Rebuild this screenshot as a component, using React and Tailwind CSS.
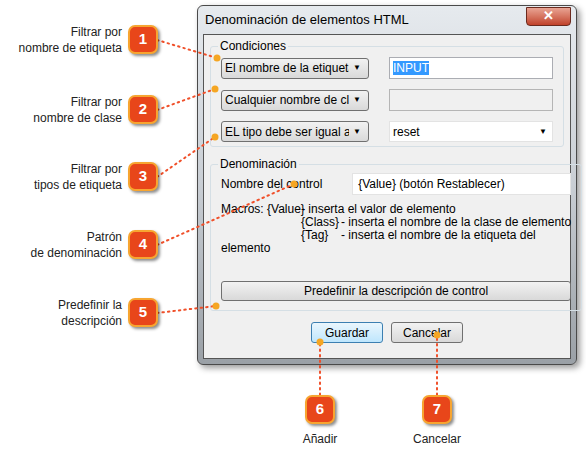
import React from "react";

const font = { fontFamily: '"Liberation Sans", Arial, sans-serif' };

function Badge({ n, className }) {
  return (
    <div
      className={`absolute w-[30px] h-[29px] rounded-[7px] bg-[#e8461a] border-2 border-[#f7a531] text-white text-[15px] font-bold flex items-center justify-center shadow-[2px_2px_3px_rgba(0,0,0,0.45)] ${className}`}
    >
      {n}
    </div>
  );
}

function Select({ label }) {
  return (
    <div className="w-[148px] h-[21px] border border-[#707070] rounded-[3px] bg-gradient-to-b from-[#f2f2f2] to-[#d9d9d9] flex items-center justify-between px-[3px] text-[12px] text-black">
      <span className="whitespace-nowrap overflow-hidden">{label}</span>
      <span className="text-[8px] pr-[4px] pl-1 shrink-0">▼</span>
    </div>
  );
}

function Label({ lines, className }) {
  return (
    <div className={`absolute right-[464px] text-right text-[12px] leading-[16px] text-[#222] ${className}`}>
      {lines.map((l) => (
        <div key={l}>{l}</div>
      ))}
    </div>
  );
}

export default function App() {
  const dots = [
    [157, 40, 217, 58],
    [157, 110, 215, 89],
    [157, 177, 215, 137],
    [157, 245, 294, 184],
    [157, 313, 216, 306],
    [320, 395, 320, 342],
    [437, 395, 437, 335],
  ];
  return (
    <div className="relative w-[586px] h-[462px] bg-white overflow-hidden" style={font}>
      {/* dialog */}
      <div className="absolute left-[197px] top-[5px] w-[380px] h-[360px] rounded-[6px] border border-[#4a4a4a] bg-gradient-to-b from-[#e6eaee] via-[#c9ced4] to-[#9aa0a6] shadow-[3px_3px_6px_rgba(0,0,0,0.4)] flex flex-col px-[5px] pb-[5px]">
        <div className="h-[28px] flex items-center justify-between pl-[2px]">
          <span className="text-[13px] text-black">Denominación de elementos HTML</span>
          <div className="w-[45px] h-[19px] -mt-[8px] rounded-b-[4px] bg-gradient-to-b from-[#e8a393] to-[#c0412a] border border-[#6b2a1e] flex items-center justify-center text-white text-[13px] font-bold">
            ✕
          </div>
        </div>
        <div className="flex-1 bg-[#f0f0f0] border border-[#555] px-[6px] pt-[2px] flex flex-col">
          <fieldset className="border border-[#d5dfe5] rounded-[3px] px-[10px] pb-[8px] h-[110px]">
            <legend className="text-[12px] px-[2px] -ml-[3px]">Condiciones</legend>
            <div className="flex flex-col gap-[10px] mt-[2px]">
              <div className="flex items-center justify-between">
                <Select label="El nombre de la etiqueta d" />
                <div className="w-[164px] h-[22px] border border-[#abadb3] bg-white text-[12px] px-[3px] flex items-center">
                  <span className="bg-[#3399ff] text-white leading-[14px]">INPUT</span>
                </div>
              </div>
              <div className="flex items-center justify-between">
                <Select label="Cualquier nombre de clase" />
                <div className="w-[164px] h-[22px] border border-[#b5b5b5] bg-[#f0f0f0]" />
              </div>
              <div className="flex items-center justify-between">
                <Select label="EL tipo debe ser igual a" />
                <div className="w-[164px] h-[21px] bg-white border border-[#e3e3e3] text-[12px] px-[3px] flex items-center justify-between">
                  <span>reset</span>
                  <span className="text-[8px] pr-[2px]">▼</span>
                </div>
              </div>
            </div>
          </fieldset>
          <fieldset className="border border-[#d5dfe5] rounded-[3px] px-[10px] pb-[8px] mt-[8px] h-[156px]">
            <legend className="text-[12px] px-[2px] -ml-[3px]">Denominación</legend>
            <div className="flex items-center justify-between text-[12px]">
              <span>Nombre del control</span>
              <div className="w-[219px] h-[22px] border border-[#e3e3e3] bg-white px-[5px] flex items-center">
                {"{Value} (botón Restablecer)"}
              </div>
            </div>
            <div className="mt-[8px] text-[12px] leading-[13px] whitespace-nowrap">
              <div className="flex"><span className="w-[80px]">Macros: {"{Value}"}</span><span>- inserta el valor de elemento</span></div>
              <div className="flex"><span className="w-[40px] ml-[80px]">{"{Class}"}</span><span>- inserta el nombre de la clase de elemento</span></div>
              <div className="flex"><span className="w-[40px] ml-[80px]">{"{Tag}"}</span><span>- inserta el nombre de la etiqueta del</span></div>
              <div>elemento</div>
            </div>
            <div className="mt-[26px] h-[20px] border border-[#707070] rounded-[3px] bg-gradient-to-b from-[#f2f2f2] to-[#d9d9d9] flex items-center justify-center text-[12px]">
              Predefinir la descripción de control
            </div>
          </fieldset>
          <div className="flex justify-center gap-[8px] mt-[11px]">
            <div className="w-[72px] h-[21px] border border-[#3c7fb1] rounded-[3px] bg-gradient-to-b from-[#eaf6fd] to-[#bee6fd] flex items-center justify-center text-[12px]">Guardar</div>
            <div className="w-[72px] h-[21px] border border-[#707070] rounded-[3px] bg-gradient-to-b from-[#f2f2f2] to-[#d9d9d9] flex items-center justify-center text-[12px]">Cancelar</div>
          </div>
        </div>
      </div>

      {/* callout lines */}
      <svg className="absolute left-0 top-0" width="586" height="462">
        {dots.map(([x1, y1, x2, y2], i) => (
          <g key={i}>
            <line x1={x1} y1={y1} x2={x2} y2={y2} stroke="#f0502a" strokeWidth="2" strokeDasharray="1.5 4" strokeLinecap="round" />
            <circle cx={x2} cy={y2} r="3.5" fill="#f5a623" />
          </g>
        ))}
      </svg>

      <Label lines={["Filtrar por", "nombre de etiqueta"]} className="top-[24px]" />
      <Label lines={["Filtrar por", "nombre de clase"]} className="top-[94px]" />
      <Label lines={["Filtrar por", "tipos de etiqueta"]} className="top-[161px]" />
      <Label lines={["Patrón", "de denominación"]} className="top-[229px]" />
      <Label lines={["Predefinir la", "descripción"]} className="top-[297px]" />

      <Badge n="1" className="left-[128px] top-[25px]" />
      <Badge n="2" className="left-[128px] top-[95px]" />
      <Badge n="3" className="left-[128px] top-[162px]" />
      <Badge n="4" className="left-[128px] top-[230px]" />
      <Badge n="5" className="left-[128px] top-[298px]" />
      <Badge n="6" className="left-[305px] top-[395px]" />
      <Badge n="7" className="left-[422px] top-[395px]" />

      <div className="absolute left-[290px] w-[60px] top-[430px] text-center text-[12px] text-[#222]">Añadir</div>
      <div className="absolute left-[397px] w-[80px] top-[430px] text-center text-[12px] text-[#222]">Cancelar</div>
    </div>
  );
}
